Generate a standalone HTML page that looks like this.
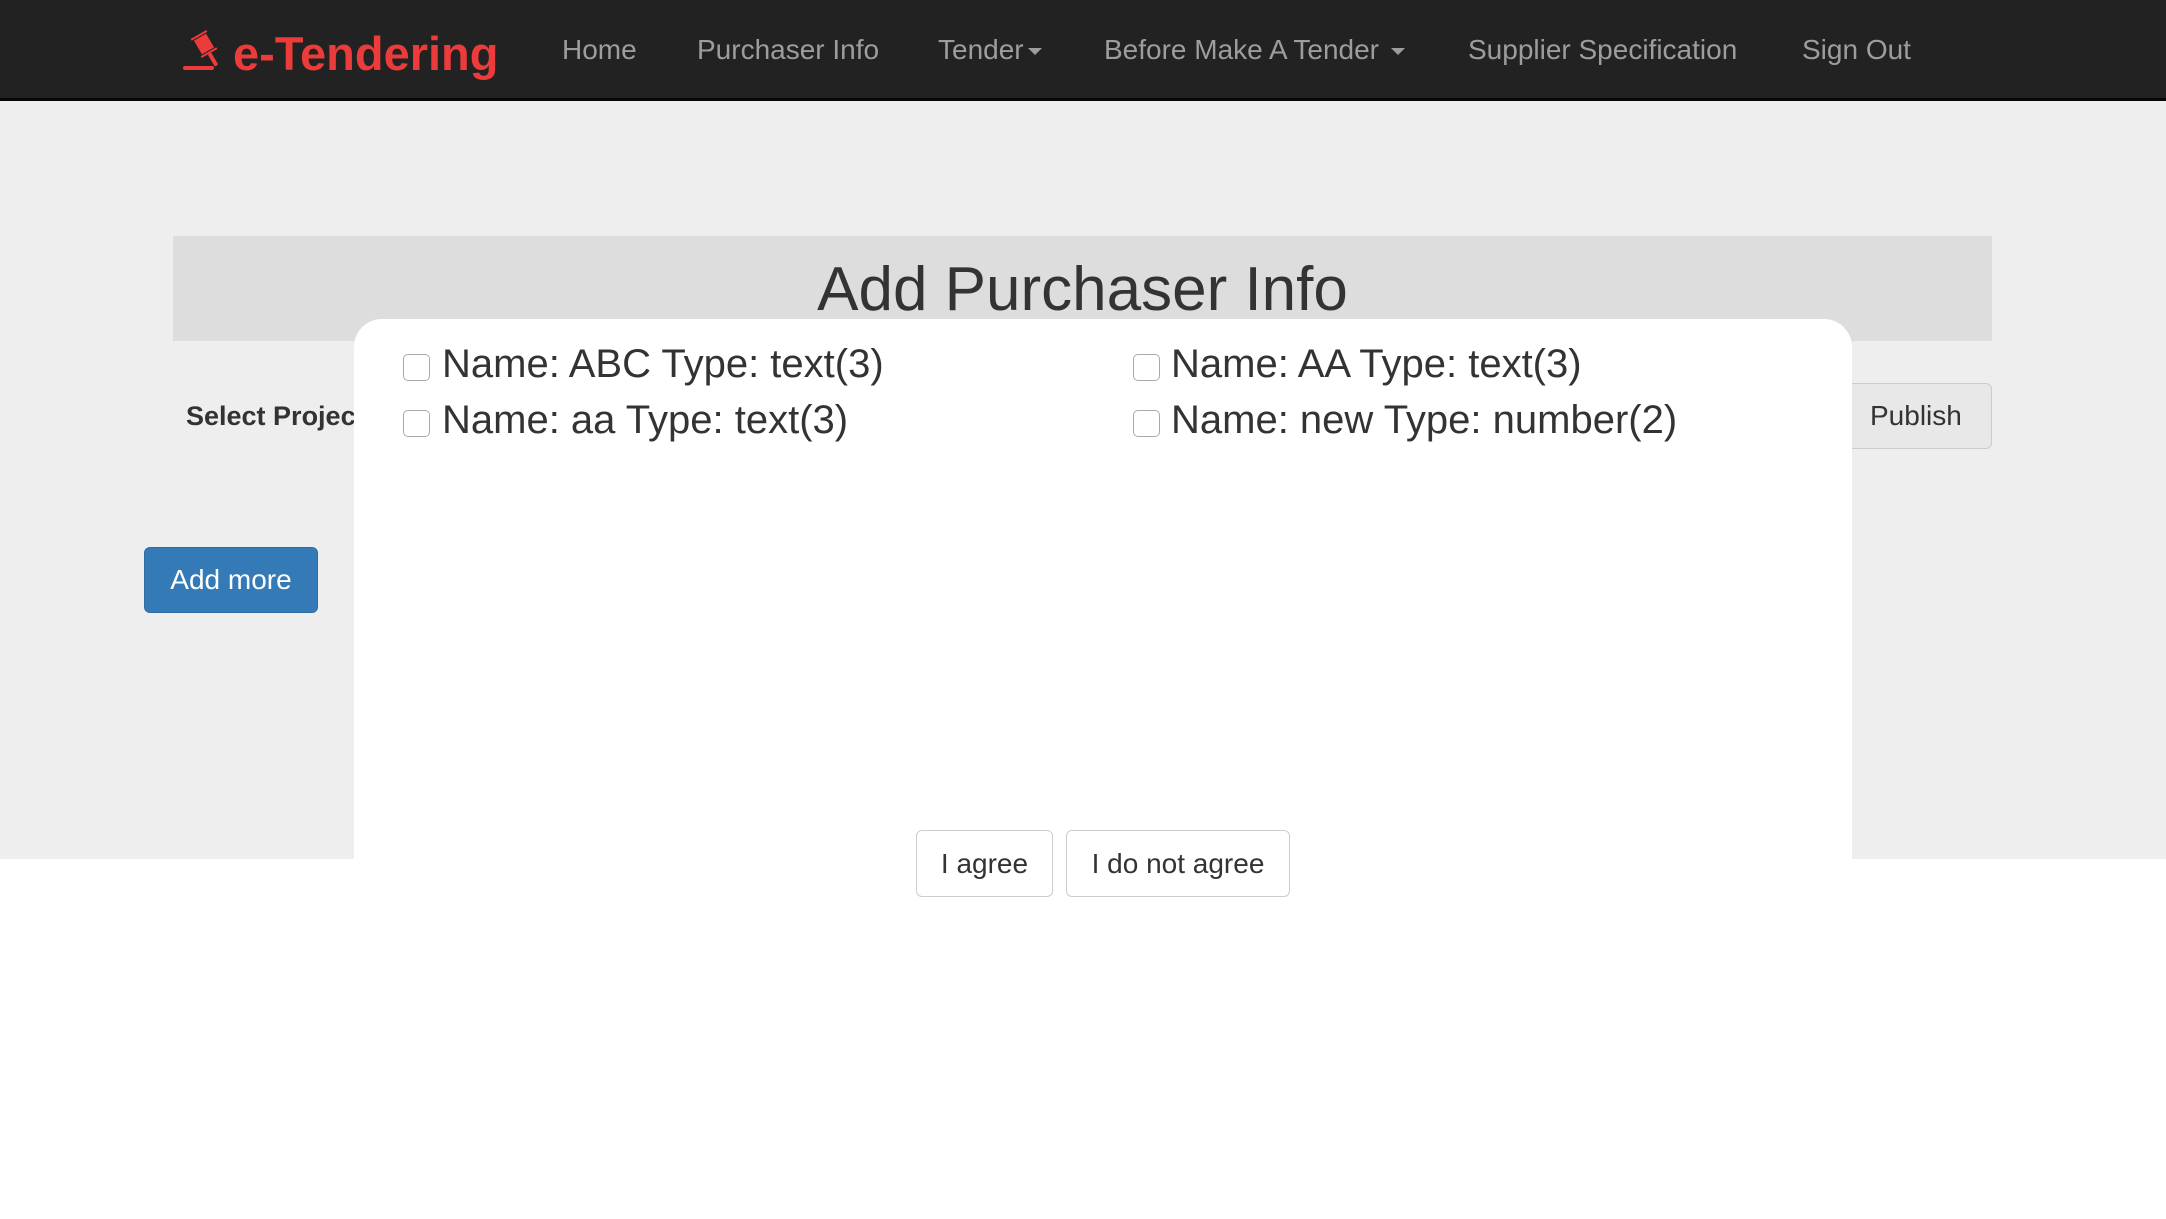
<!DOCTYPE html>
<html><head><meta charset="utf-8"><style>
*{margin:0;padding:0;box-sizing:border-box}
body{width:2166px;height:1196px;background:#fff;font-family:"Liberation Sans",Arial,sans-serif;position:relative;overflow:hidden}
.nav{position:absolute;left:0;top:0;width:2166px;height:101px;background:#222;border-bottom:3px solid #080808}
.nav a{position:absolute;top:34px;color:#9d9d9d;font-size:28px;text-decoration:none;white-space:nowrap}
.caret{display:inline-block;width:0;height:0;border-left:7px solid transparent;border-right:7px solid transparent;border-top:7px solid #9d9d9d;vertical-align:middle;margin-left:4px}
.logo{position:absolute;left:233px;top:26px;color:#eb3b3b;font-size:47px;font-weight:bold}
.gray{position:absolute;left:0;top:101px;width:2166px;height:758px;background:#eee}
.hdr{position:absolute;left:173px;top:236px;width:1819px;height:105px;background:#ddd;text-align:center;font-size:62px;color:#333;line-height:108px}
.lbl{position:absolute;left:186px;top:401px;font-size:27px;font-weight:bold;color:#333;white-space:nowrap}
.btn{position:absolute;border:1px solid #ccc;border-radius:6px;background:#fff;color:#333;font-size:28px;text-align:center}
.modal{position:absolute;left:354px;top:319px;width:1498px;height:900px;background:#fff;border-radius:28px}
.cb{position:absolute;width:27px;height:27px;border:1.5px solid #aaa;border-radius:5px;background:#fff}
.t{position:absolute;font-size:40px;color:#333;white-space:nowrap}
</style></head><body>
<div class="nav">
<svg style="position:absolute;left:180px;top:28px" width="50" height="48" viewBox="180 28 50 48">
<rect x="183" y="66" width="31" height="4" rx="2" fill="#eb3b3b"/>
<g transform="rotate(-30 204 44)" fill="#eb3b3b">
<rect x="197" y="36" width="14" height="16"/>
<rect x="195" y="33" width="18" height="2"/>
<rect x="195" y="53" width="18" height="2"/>
<rect x="202" y="55" width="4" height="14" rx="1"/>
</g></svg>
<div class="logo">e-Tendering</div>
<a style="left:562px">Home</a>
<a style="left:697px">Purchaser Info</a>
<a style="left:938px">Tender<span class="caret"></span></a>
<a style="left:1104px">Before Make A Tender <span class="caret"></span></a>
<a style="left:1468px">Supplier Specification</a>
<a style="left:1802px">Sign Out</a>
</div>
<div class="gray"></div>
<div class="hdr">Add Purchaser Info</div>
<div class="lbl">Select Project</div>
<div class="btn" style="left:1800px;top:383px;width:192px;height:66px;line-height:64px;background:#e8e8e8;padding-left:69px;text-align:left">Publish</div>
<div class="btn" style="left:144px;top:547px;width:174px;height:66px;line-height:64px;background:#337ab7;border-color:#2e6da4;color:#fff">Add more</div>
<div class="modal"></div>
<div class="cb" style="left:403px;top:354px"></div><div class="t" style="left:442px;top:342px">Name: ABC Type: text(3)</div>
<div class="cb" style="left:1133px;top:354px"></div><div class="t" style="left:1171px;top:342px">Name: AA Type: text(3)</div>
<div class="cb" style="left:403px;top:410px"></div><div class="t" style="left:442px;top:398px">Name: aa Type: text(3)</div>
<div class="cb" style="left:1133px;top:410px"></div><div class="t" style="left:1171px;top:398px">Name: new Type: number(2)</div>
<div class="btn" style="left:916px;top:830px;width:137px;height:67px;line-height:65px">I agree</div>
<div class="btn" style="left:1066px;top:830px;width:224px;height:67px;line-height:65px">I do not agree</div>
</body></html>
